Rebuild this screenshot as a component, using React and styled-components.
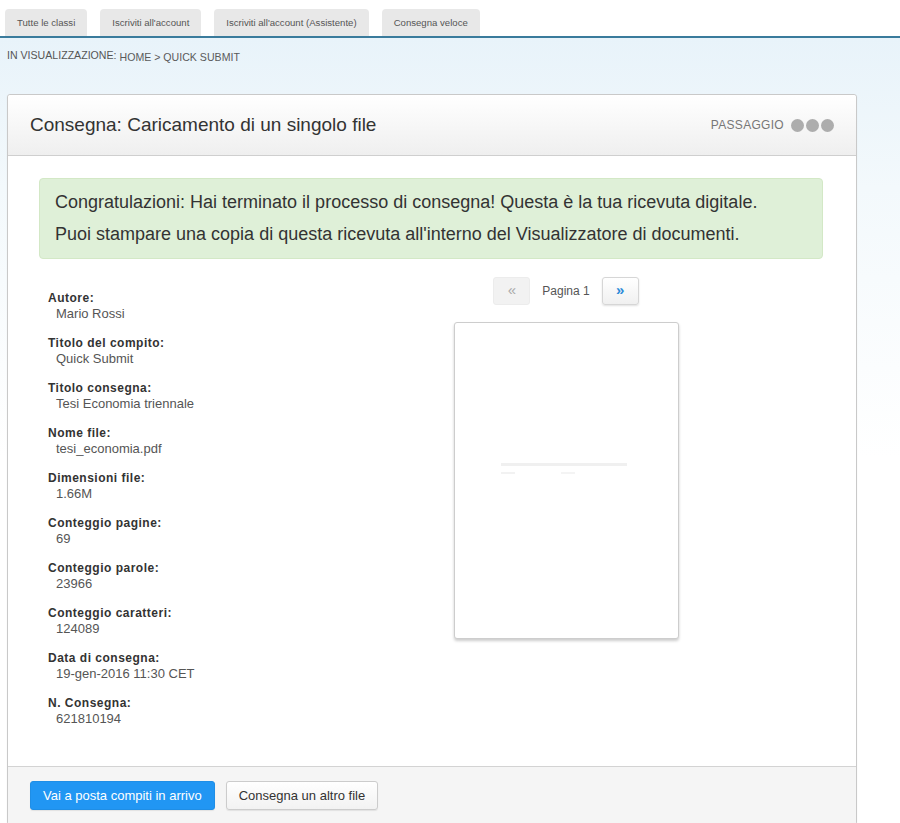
import React from "react";
import styled, { createGlobalStyle } from "styled-components";

const GlobalStyle = createGlobalStyle`
  html, body {
    margin: 0;
    padding: 0;
  }
  body {
    font-family: "Liberation Sans", Arial, sans-serif;
    color: #333;
    background: #fff;
  }
`;

const TabBar = styled.div`
  display: flex;
  gap: 13px;
  padding: 9px 6px 0 5px;
  border-bottom: 2px solid #3a7b9c;
  background: #fff;
`;

const Tab = styled.div`
  height: 27px;
  line-height: 27px;
  padding: 0 12px;
  background: #e8e8e8;
  border-radius: 4px 4px 0 0;
  font-size: 9.6px;
  color: #555;
`;

const Page = styled.div`
  background: linear-gradient(#e8f3fa 0px, #f3f9fc 150px, #ffffff 420px);
  padding: 0 43px 0 7px;
`;

const Breadcrumb = styled.div`
  padding: 11px 0 0;
  height: 56px;
  box-sizing: border-box;
  font-size: 10.6px;
  color: #555;
  text-transform: uppercase;
  a {
    color: #5a5a5a;
    text-decoration: none;
    position: relative;
    top: 2px;
    margin-left: 3px;
  }
`;

const Panel = styled.div`
  border: 1px solid #c9c9c9;
  border-radius: 3px;
  background: #fff;
  box-shadow: 0 1px 2px rgba(0, 0, 0, 0.06);
`;

const PanelHeader = styled.div`
  height: 60px;
  display: flex;
  align-items: center;
  justify-content: space-between;
  padding: 0 22px 0 22px;
  background: linear-gradient(#ffffff, #efefef);
  border-bottom: 1px solid #cfcfcf;
  border-radius: 3px 3px 0 0;
  h1 {
    margin: 0;
    font-size: 19px;
    font-weight: normal;
    color: #333;
  }
`;

const Step = styled.div`
  display: flex;
  align-items: center;
  font-size: 12px;
  letter-spacing: 0.3px;
  color: #777;
  span {
    margin-right: 5px;
  }
`;

const Dot = styled.i`
  width: 13px;
  height: 13px;
  border-radius: 50%;
  background: #adadad;
  margin-left: 2px;
`;

const PanelBody = styled.div`
  padding: 22px 33px 25px 31px;
`;

const Alert = styled.div`
  background: #dff0d8;
  border: 1px solid #d3e8c6;
  border-radius: 4px;
  padding: 7px 15px 8px;
  font-size: 18px;
  line-height: 32px;
  color: #333;
  p {
    margin: 0;
  }
`;

const Details = styled.div`
  display: grid;
  grid-template-columns: 270px 1fr;
  margin-top: 18px;
`;

const InfoList = styled.dl`
  margin: 14px 0 0 9px;
  line-height: 15px;
  dt {
    font-size: 12px;
    font-weight: bold;
    color: #333;
    letter-spacing: 0.5px;
  }
  dd {
    font-size: 13px;
    margin: 0 0 15px 8px;
    color: #555;
  }
`;

const Viewer = styled.div`
  display: flex;
  flex-direction: column;
  align-items: center;
`;

const Pager = styled.div`
  display: flex;
  align-items: center;
  gap: 12px;
  height: 28px;
  font-size: 12px;
  color: #555;
`;

const PageButton = styled.button`
  width: 37px;
  height: 28px;
  border-radius: 3px;
  font-size: 15px;
  font-family: inherit;
  padding: 0 0 3px;
  border: 1px solid ${(p) => (p.disabled ? "#ececec" : "#d6d6d6")};
  background: ${(p) => (p.disabled ? "#f2f2f2" : "linear-gradient(#ffffff, #f0f0f0)")};
  color: ${(p) => (p.disabled ? "#aaa" : "#2a8ad8")};
  box-shadow: ${(p) => (p.disabled ? "none" : "0 1px 2px rgba(0,0,0,0.12)")};
  font-weight: ${(p) => (p.disabled ? "normal" : "bold")};
`;

const Preview = styled.div`
  margin-top: 17px;
  width: 225px;
  height: 317px;
  border: 1px solid #cdcdcd;
  border-radius: 3px;
  background: #fff;
  box-shadow: 0 2px 3px rgba(0, 0, 0, 0.2);
  box-sizing: border-box;
  display: flex;
  justify-content: center;
  padding-top: 140px;
`;

const PanelFooter = styled.div`
  display: flex;
  gap: 11px;
  padding: 14px 22px 14px 22px;
  background: #f5f5f5;
  border-top: 1px solid #d3d3d3;
`;

const Button = styled.button`
  height: 29px;
  padding: 0 12px;
  border-radius: 3px;
  font-family: inherit;
  font-size: 13px;
  border: 1px solid ${(p) => (p.primary ? "#1f8ee6" : "#cccccc")};
  background: ${(p) => (p.primary ? "#2196f3" : "linear-gradient(#ffffff, #f2f2f2)")};
  color: ${(p) => (p.primary ? "#fff" : "#333")};
  box-shadow: 0 1px 1px rgba(0, 0, 0, 0.08);
`;

const details = [
  ["Autore:", "Mario Rossi"],
  ["Titolo del compito:", "Quick Submit"],
  ["Titolo consegna:", "Tesi Economia triennale"],
  ["Nome file:", "tesi_economia.pdf"],
  ["Dimensioni file:", "1.66M"],
  ["Conteggio pagine:", "69"],
  ["Conteggio parole:", "23966"],
  ["Conteggio caratteri:", "124089"],
  ["Data di consegna:", "19-gen-2016 11:30 CET"],
  ["N. Consegna:", "621810194"],
];

const tabs = [
  "Tutte le classi",
  "Iscriviti all'account",
  "Iscriviti all'account (Assistente)",
  "Consegna veloce",
];

const App = () => {
  return (
    <>
      <GlobalStyle />
      <TabBar>
        {tabs.map((t) => (
          <Tab key={t}>{t}</Tab>
        ))}
      </TabBar>
      <Page>
        <Breadcrumb>
          In visualizzazione:<a href="#">Home &gt; Quick Submit</a>
        </Breadcrumb>
        <Panel>
          <PanelHeader>
            <h1>Consegna: Caricamento di un singolo file</h1>
            <Step>
              <span>PASSAGGIO</span>
              <Dot />
              <Dot />
              <Dot />
            </Step>
          </PanelHeader>
          <PanelBody>
            <Alert>
              <p>
                Congratulazioni: Hai terminato il processo di consegna! Questa è
                la tua ricevuta digitale.
              </p>
              <p>
                Puoi stampare una copia di questa ricevuta all'interno del
                Visualizzatore di documenti.
              </p>
            </Alert>
            <Details>
              <InfoList>
                {details.map(([label, value]) => (
                  <React.Fragment key={label}>
                    <dt>{label}</dt>
                    <dd>{value}</dd>
                  </React.Fragment>
                ))}
              </InfoList>
              <Viewer>
                <Pager>
                  <PageButton disabled>«</PageButton>
                  <span>Pagina 1</span>
                  <PageButton>»</PageButton>
                </Pager>
                <Preview>
                  <svg width="130" height="14" viewBox="0 0 130 14">
                    <rect x="0" y="0" width="126" height="3" fill="#f0f0f0" />
                    <rect x="0" y="9" width="14" height="2" fill="#f2f2f2" />
                    <rect x="60" y="9" width="14" height="2" fill="#f4f4f4" />
                  </svg>
                </Preview>
              </Viewer>
            </Details>
          </PanelBody>
          <PanelFooter>
            <Button primary>Vai a posta compiti in arrivo</Button>
            <Button>Consegna un altro file</Button>
          </PanelFooter>
        </Panel>
      </Page>
    </>
  );
};

export default App;
